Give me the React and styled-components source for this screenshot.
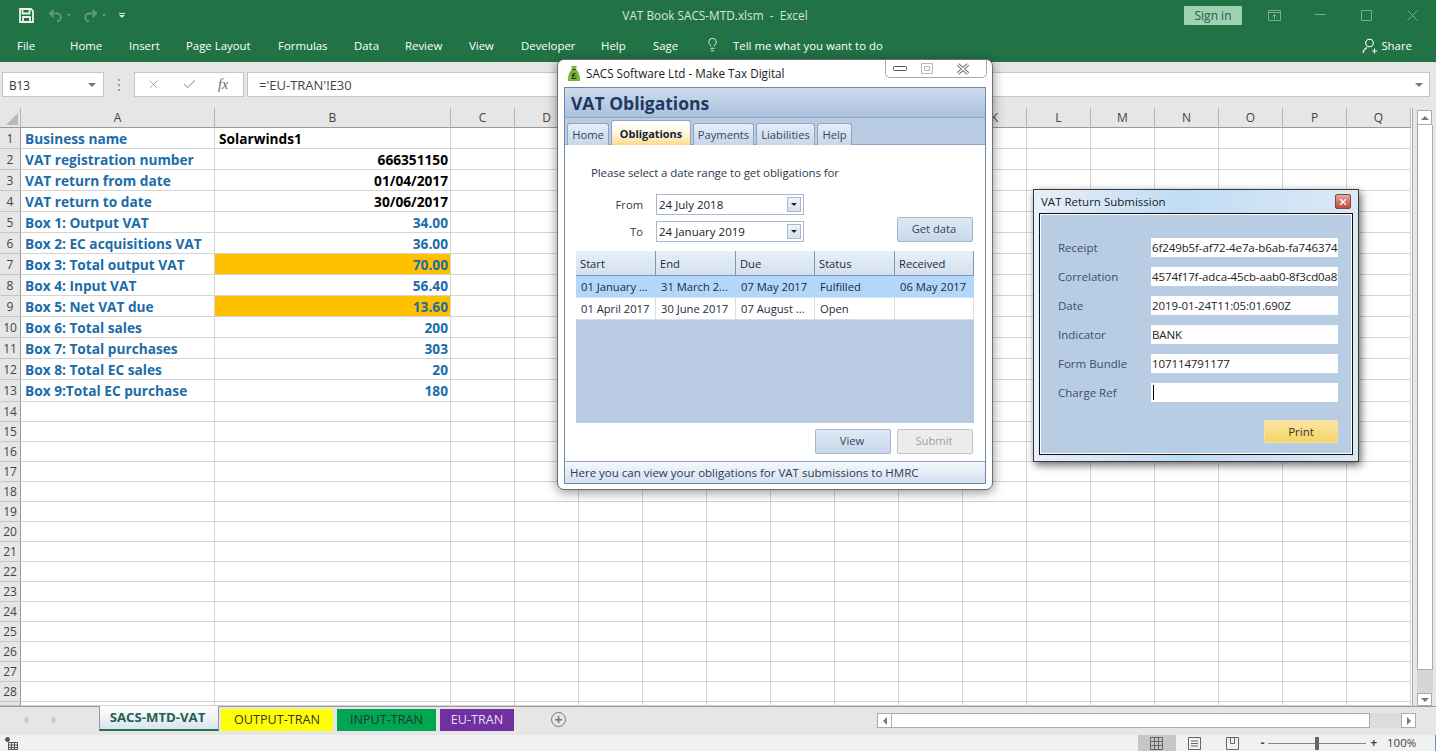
import React from "react";
import styled, { createGlobalStyle } from "styled-components";
import { X, Check, Lightbulb } from "lucide-react";

const GlobalStyle = createGlobalStyle`
    *, *::before, *::after {
        box-sizing: border-box;
    }
    html, body {
        margin: 0;
        padding: 0;
        background: #fff;
    }
    body {
        font-family: "Open Sans", "Liberation Sans", sans-serif;
    }
`;

const Page = styled.div`
    position: relative;
    width: 1436px;
    height: 751px;
    overflow: hidden;
    display: flex;
    flex-direction: column;
    font-size: 11.5px;
    color: #333;
`;

/* title bar */
const TitleBar = styled.div`
    height: 31px;
    flex-shrink: 0;
    background: #217346;
    color: #d6e6dc;
    display: grid;
    grid-template-columns: 1fr auto 1fr;
    align-items: center;
    padding-bottom: 1px;
`;
const Qat = styled.div`
    display: flex;
    align-items: center;
    padding-left: 19px;
    gap: 14px;
`;
const QatUndo = styled.div`
    display: flex;
    align-items: center;
    gap: 4px;
    margin-right: -2px;
    &::after {
        content: "";
        border-left: 2px solid transparent;
        border-right: 2px solid transparent;
        border-top: 3px solid #5f9b7b;
    }
`;
const Customize = styled.div`
    margin-left: 1px;
    display: flex;
    flex-direction: column;
    align-items: center;
    gap: 1px;
    &::before {
        content: "";
        width: 6px;
        height: 1px;
        background: #dfeae3;
    }
    &::after {
        content: "";
        border-left: 3px solid transparent;
        border-right: 3px solid transparent;
        border-top: 3px solid #dfeae3;
    }
`;
const DocTitle = styled.div`
    font-size: 11.8px;
    margin-right: 6px;
`;
const WinControls = styled.div`
    display: flex;
    justify-content: flex-end;
    align-items: center;
    padding-right: 1px;
`;
const SignIn = styled.div`
    width: 58px;
    height: 19px;
    margin-right: 9px;
    background: #9fd0b4;
    color: #25603f;
    border-radius: 1px;
    font-size: 12px;
    line-height: 19px;
    text-align: center;
`;
const WinBtn = styled.div`
    width: 46px;
    height: 26px;
    display: flex;
    align-items: center;
    justify-content: center;
`;

/* ribbon tabs */
const Ribbon = styled.div`
    height: 31px;
    flex-shrink: 0;
    background: #217346;
    color: #fff;
    display: flex;
    align-items: center;
    padding: 0 24px 2px 17px;
    font-size: 11.4px;
`;
const RibbonTab = styled.div`
    width: ${(p) => p.$w}px;
    flex-shrink: 0;
    white-space: nowrap;
`;
const Share = styled.div`
    margin-left: auto;
    display: flex;
    align-items: center;
    gap: 3px;
`;

/* formula bar */
const FormulaBar = styled.div`
    height: 46px;
    flex-shrink: 0;
    background: #e6e6e6;
    display: flex;
    padding: 10px 6px 11px 2px;
`;
const FieldBox = styled.div`
    background: #fff;
    border: 1px solid #c6c6c6;
    display: flex;
    align-items: center;
`;
const NameBox = styled(FieldBox)`
    width: 102px;
    padding: 0 7px 0 6px;
    justify-content: space-between;
    font-size: 11.8px;
`;
const Caret = styled.span`
    width: 0;
    height: 0;
    border-left: 4px solid transparent;
    border-right: 4px solid transparent;
    border-top: 4px solid ${(p) => p.$color || "#777"};
`;
const Dots = styled.div`
    width: 30px;
    display: flex;
    flex-direction: column;
    align-items: center;
    justify-content: center;
    gap: 3px;
    span {
        width: 2px;
        height: 2px;
        background: #a0a0a0;
    }
`;
const FxBox = styled(FieldBox)`
    width: 110px;
    margin-right: 3px;
    padding-left: 11px;
    gap: 21px;
    color: #b0b0b0;
`;
const Fx = styled.i`
    font-family: "Liberation Serif", serif;
    font-size: 14px;
    color: #666;
`;
const FormulaInput = styled(FieldBox)`
    flex: 1;
    padding: 0 6px 0 11px;
    justify-content: space-between;
    color: #444;
    font-size: 13px;
`;

/* sheet */
const SheetArea = styled.div`
    height: 598px;
    flex-shrink: 0;
    display: flex;
    background: #e6e6e6;
`;
const SheetGrid = styled.div`
    width: 1413px;
    background: #fff;
    display: grid;
    grid-template-columns: 21px 194px 236px repeat(15, 64px);
    grid-template-rows: 20px repeat(12, 21px) 22px repeat(15, 20px) 4px;
    border-right: 1px solid #a8a8a8;
    overflow: hidden;
`;
const Corner = styled.div`
    background: #e6e6e6;
    border-right: 1px solid #b4b4b4;
    border-bottom: 1px solid #9a9a9a;
    display: flex;
    align-items: flex-end;
    justify-content: flex-end;
    padding: 0 2px 2px 0;
    &::after {
        content: "";
        border-left: 12px solid transparent;
        border-bottom: 12px solid #b8b8b8;
    }
`;
const ColHead = styled.div`
    background: #e6e6e6;
    border-right: 1px solid #b4b4b4;
    border-bottom: 1px solid #9a9a9a;
    text-align: center;
    font-size: 12px;
    line-height: 19px;
    color: #444;
`;
const RowHead = styled.div`
    background: #e6e6e6;
    border-right: 1px solid #9a9a9a;
    border-bottom: 1px solid #c4c4c4;
    font-size: 12px;
    color: #444;
    display: flex;
    align-items: center;
    justify-content: center;
`;
const Cell = styled.div`
    background: ${(p) => p.$fill || "#fff"};
    color: ${(p) => p.$color || "#000"};
    font-weight: 700;
    font-size: 13.7px;
    border-right: 1px solid #d4d4d4;
    border-bottom: 1px solid #d4d4d4;
    padding: 0 2px 0 4px;
    display: flex;
    align-items: center;
    justify-content: ${(p) => (p.$align === "right" ? "flex-end" : "flex-start")};
    white-space: nowrap;
`;

/* scrollbars */
const VScroll = styled.div`
    flex: 1;
    display: flex;
    flex-direction: column;
    padding: 2px 3px 0 4px;
`;
const ScrollBtn = styled.div`
    background: #fff;
    border: 1px solid #ababab;
    width: ${(p) => p.$w || 15}px;
    height: ${(p) => p.$h || 15}px;
    flex-shrink: 0;
    display: flex;
    align-items: center;
    justify-content: center;
`;
const VThumb = styled.div`
    height: 545px;
    flex-shrink: 0;
    background: #fff;
    border: 1px solid #ababab;
    border-top: 0;
`;
const ScrollGap = styled.div`
    flex: 1;
    background: #d6d6d6;
`;
const ArrowV = styled.span`
    width: 0;
    height: 0;
    border-left: 4px solid transparent;
    border-right: 4px solid transparent;
    ${(p) => (p.$up ? "border-bottom" : "border-top")}: 4px solid #777;
`;
const ArrowH = styled.span`
    width: 0;
    height: 0;
    border-top: 4px solid transparent;
    border-bottom: 4px solid transparent;
    ${(p) => (p.$left ? "border-right" : "border-left")}: 4px solid ${(p) => p.$color || "#777"};
`;

/* sheet tabs */
const TabBar = styled.div`
    height: 29px;
    flex-shrink: 0;
    background: #e6e6e6;
    border-top: 1px solid #9a9a9a;
    display: flex;
    align-items: flex-start;
    padding-right: 20px;
`;
const TabNav = styled.div`
    width: 99px;
    height: 26px;
    flex-shrink: 0;
    display: flex;
    align-items: center;
    gap: 24px;
    padding-left: 24px;
`;
const ActiveSheetTab = styled.div`
    width: 120px;
    height: 25px;
    flex-shrink: 0;
    margin-top: -1px;
    margin-right: 2px;
    padding-right: 3px;
    background: linear-gradient(#ffffff, #d8e4f2);
    border-left: 1px solid #9a9a9a;
    border-right: 1px solid #9a9a9a;
    border-bottom: 2px solid #217346;
    color: #25604a;
    font-weight: 700;
    font-size: 13.2px;
    line-height: 23px;
    text-align: center;
`;
const SheetTab = styled.div`
    width: ${(p) => p.$w}px;
    height: 22px;
    flex-shrink: 0;
    margin-top: 2px;
    margin-right: 4px;
    background: ${(p) => p.$bg};
    color: ${(p) => p.$fg};
    font-size: 12.6px;
    line-height: 22px;
    text-align: center;
    white-space: nowrap;
`;
const AddSheet = styled.div`
    width: 15px;
    height: 15px;
    margin: 5px 0 0 33px;
    border: 1px solid #777;
    border-radius: 50%;
    color: #777;
    display: flex;
    align-items: center;
    justify-content: center;
    font-size: 14px;
    line-height: 1;
    font-weight: 700;
`;
const HScroll = styled.div`
    margin-left: auto;
    width: 539px;
    height: 15px;
    margin-top: 6px;
    display: flex;
`;
const HThumb = styled.div`
    width: 478px;
    background: #fff;
    border: 1px solid #ababab;
    border-left: 0;
    flex-shrink: 0;
`;
const HTrack = styled.div`
    flex: 1;
    background: #dcdcdc;
`;

/* status bar */
const StatusBar = styled.div`
    height: 16px;
    flex-shrink: 0;
    background: #f1f1f1;
    border-right: 1px solid #5b8fc0;
    display: flex;
    align-items: center;
    padding-left: 5px;
    color: #444;
`;
const ViewBtn = styled.div`
    width: 38px;
    height: 16px;
    background: ${(p) => (p.$on ? "#c6c6c6" : "transparent")};
    display: flex;
    align-items: center;
    justify-content: center;
`;
const ViewGroup = styled.div`
    margin-left: auto;
    display: flex;
    margin-right: 1px;
`;
const ZoomSlider = styled.div`
    display: flex;
    align-items: center;
    margin-left: 8px;
    font-weight: 700;
    line-height: 14px;
    gap: 4px;
`;
const SliderTrack = styled.div`
    position: relative;
    width: 98px;
    height: 1px;
    background: #888;
    &::after {
        content: "";
        position: absolute;
        left: 47px;
        top: -6px;
        width: 4px;
        height: 13px;
        background: #666;
    }
`;
const ZoomValue = styled.div`
    width: 58px;
    padding-left: 10px;
    line-height: 14px;
`;

/* obligations window */
const AppWindow = styled.div`
    position: absolute;
    left: 557px;
    top: 59px;
    width: 436px;
    height: 431px;
    background: #fff;
    border: 1px solid #6f6f6f;
    border-radius: 7px;
    box-shadow: 0 2px 12px rgba(0, 0, 0, 0.45);
    display: flex;
    flex-direction: column;
    padding: 0 6px 5px 6px;
    color: #2b3a4e;
`;
const Caption = styled.div`
    height: 27px;
    flex-shrink: 0;
    display: flex;
    align-items: center;
    gap: 4px;
    padding: 0 0 1px 2px;
    font-size: 11.7px;
    color: #1c1c1c;
    position: relative;
`;
const CaptionBtns = styled.div`
    position: absolute;
    right: -1px;
    top: 0;
    width: 102px;
    height: 18px;
    border: 1px solid #a9a9a9;
    border-top: 0;
    border-radius: 0 0 5px 5px;
    display: grid;
    grid-template-columns: 28px 26px 1fr;
    align-items: center;
    justify-items: center;
    background: #fff;
`;
const Panel = styled.div`
    flex: 1;
    border: 1px solid #6f88a8;
    display: flex;
    flex-direction: column;
    min-height: 0;
`;
const PanelHead = styled.div`
    height: 30px;
    flex-shrink: 0;
    background: linear-gradient(#cfdcec, #a9c0dc);
    border-bottom: 1px solid #8ea6c4;
    color: #1e3a63;
    font-size: 17.5px;
    font-weight: 700;
    line-height: 31px;
    padding-left: 6px;
`;
const TabStrip = styled.div`
    height: 27px;
    flex-shrink: 0;
    background: #b8cbe3;
    border-bottom: 1px solid #8ea6c4;
    display: flex;
    align-items: flex-end;
    padding-left: 2px;
    gap: 2px;
`;
const PanelTab = styled.div`
    width: ${(p) => p.$w}px;
    height: ${(p) => (p.$on ? 25 : 22)}px;
    margin-bottom: -1px;
    background: ${(p) =>
        p.$on
            ? "linear-gradient(#ffffff 10%, #fff6d8 55%, #ffd98a)"
            : "linear-gradient(#e6eef7, #c6d6ea)"};
    border: 1px solid #8ea6c4;
    border-bottom: 0;
    border-radius: 3px 3px 0 0;
    color: ${(p) => (p.$on ? "#14233a" : "#34465f")};
    font-weight: ${(p) => (p.$on ? 700 : 400)};
    font-size: ${(p) => (p.$on ? 10.9 : 11.2)}px;
    display: flex;
    align-items: center;
    justify-content: center;
    white-space: nowrap;
`;
const PanelBody = styled.div`
    flex: 1;
    display: flex;
    flex-direction: column;
    padding: 20px 11px 0 11px;
    min-height: 0;
`;
const Intro = styled.div`
    padding-left: 15px;
    line-height: 16px;
    letter-spacing: -0.1px;
`;
const FormRow = styled.div`
    display: flex;
    justify-content: space-between;
    align-items: flex-end;
    margin-top: 13px;
    padding-right: 1px;
`;
const DateGrid = styled.div`
    display: grid;
    grid-template-columns: 67px 148px;
    column-gap: 13px;
    row-gap: 6px;
    grid-auto-rows: 21px;
    align-items: center;
`;
const DateLabel = styled.div`
    text-align: right;
    font-size: 11.2px;
`;
const Combo = styled.div`
    height: 21px;
    background: #fff;
    border: 1px solid #a9b8cc;
    display: flex;
    align-items: center;
    justify-content: space-between;
    padding: 0 2px 0 2px;
    color: #222;
`;
const ComboBtn = styled.div`
    width: 14px;
    height: 15px;
    background: linear-gradient(#eef3f9, #d5e0ee);
    border: 1px solid #a9b8cc;
    display: flex;
    align-items: center;
    justify-content: center;
`;
const ComboCaret = styled.span`
    width: 0;
    height: 0;
    border-left: 3px solid transparent;
    border-right: 3px solid transparent;
    border-top: 3px solid #222;
`;
const ActionBtn = styled.div`
    width: 76px;
    height: 25px;
    border: 1px solid ${(p) => (p.$off ? "#c4c4c4" : "#a6b7cc")};
    border-radius: 2px;
    background: ${(p) =>
        p.$off ? "#ececec" : "linear-gradient(#dfe9f5, #c8d8ea)"};
    color: ${(p) => (p.$off ? "#a2a2a2" : "#33465f")};
    font-size: 11.2px;
    padding: 0 2px 2px 0;
    display: flex;
    align-items: center;
    justify-content: center;
`;
const ObTable = styled.div`
    margin-top: 9px;
    height: 172px;
    background: #b8cbe3;
    flex-shrink: 0;
`;
const ObRow = styled.div`
    display: grid;
    grid-template-columns: 80px 80px 79px 80px 79px;
    height: ${(p) => p.$h}px;
    background: ${(p) => p.$bg};
    border-bottom: 1px solid ${(p) => p.$line};
`;
const ObCell = styled.div`
    border-right: 1px solid ${(p) => p.$line};
    padding-left: ${(p) => p.$pad}px;
    font-size: 11.2px;
    display: flex;
    align-items: center;
    white-space: nowrap;
    overflow: hidden;
    color: #1e2a3a;
`;
const ButtonRow = styled.div`
    margin-top: 6px;
    display: flex;
    justify-content: flex-end;
    gap: 6px;
    padding-right: 1px;
`;
const PanelStatus = styled.div`
    height: 22px;
    margin-top: auto;
    flex-shrink: 0;
    background: linear-gradient(#f4f8fc, #d3e0f0);
    border-top: 1px solid #8ea6c4;
    padding-left: 5px;
    line-height: 21px;
`;

/* submission window */
const ReturnWindow = styled.div`
    position: absolute;
    left: 1033px;
    top: 189px;
    width: 326px;
    height: 273px;
    background: linear-gradient(90deg, #e9f0f8, #bfdcf5 45%, #dce9f5);
    border: 1px solid #3a3a3a;
    box-shadow: 2px 3px 8px rgba(0, 0, 0, 0.6);
    display: flex;
    flex-direction: column;
    padding: 0 5px 6px 5px;
`;
const ReturnCaption = styled.div`
    height: 23px;
    flex-shrink: 0;
    display: flex;
    align-items: center;
    justify-content: space-between;
    padding: 0 2px;
    color: #222;
`;
const CloseBtn = styled.div`
    width: 16px;
    height: 15px;
    background: linear-gradient(#e9a79a, #c24a38);
    border: 1px solid #7a4a48;
    border-radius: 2px;
    display: flex;
    align-items: center;
    justify-content: center;
    color: #fff;
`;
const ReturnBody = styled.div`
    flex: 1;
    background: #b8cce4;
    border: 1px solid #111;
    outline: 1px solid #fff;
    outline-offset: -2px;
    display: grid;
    grid-template-columns: 93px 187px;
    grid-auto-rows: 19px;
    row-gap: 10px;
    align-content: start;
    align-items: center;
    padding: 24px 0 0 18px;
    color: #3a4f6c;
`;
const ReturnValue = styled.div`
    height: 19px;
    background: #fff;
    color: #222;
    line-height: 19px;
    padding-left: 1px;
    letter-spacing: -0.1px;
    white-space: nowrap;
    overflow: hidden;
`;
const TextCaret = styled.span`
    display: block;
    width: 1px;
    height: 15px;
    background: #000;
    margin: 2px 0 0 1px;
`;
const PrintBtn = styled.div`
    grid-column: 2;
    justify-self: end;
    align-self: start;
    width: 74px;
    height: 23px;
    margin-top: 8px;
    background: linear-gradient(#fbe6a2, #f6d365);
    border: 1px solid #f3e3b0;
    color: #333;
    display: flex;
    align-items: center;
    justify-content: center;
`;

const ribbonTabs = [
    ["File", 53],
    ["Home", 59],
    ["Insert", 57],
    ["Page Layout", 92],
    ["Formulas", 76],
    ["Data", 51],
    ["Review", 64],
    ["View", 52],
    ["Developer", 80],
    ["Help", 52],
    ["Sage", 52],
];

const blue = "#1b6ca8";
const sheetRows = [
    ["Business name", "Solarwinds1", "left"],
    ["VAT registration number", "666351150", "right", "#000"],
    ["VAT return from date", "01/04/2017", "right", "#000"],
    ["VAT return to date", "30/06/2017", "right", "#000"],
    ["Box 1: Output VAT", "34.00", "right", blue],
    ["Box 2: EC acquisitions VAT", "36.00", "right", blue],
    ["Box 3: Total output VAT", "70.00", "right", blue, "#ffc000"],
    ["Box 4: Input VAT", "56.40", "right", blue],
    ["Box 5: Net VAT due", "13.60", "right", blue, "#ffc000"],
    ["Box 6: Total sales", "200", "right", blue],
    ["Box 7: Total purchases", "303", "right", blue],
    ["Box 8: Total EC sales", "20", "right", blue],
    ["Box 9:Total EC purchase", "180", "right", blue],
];

const columns = "ABCDEFGHIJKLMNOPQ".split("");
const emptyCols = columns.slice(2);
const rowNumbers = Array.from({ length: 29 }, (_, i) => i + 1);

const obligationRows = [
    ["01 January ...", "31 March 2...", "07 May 2017", "Fulfilled", "06 May 2017"],
    ["01 April 2017", "30 June 2017", "07 August ...", "Open", ""],
];

const returnFields = [
    ["Receipt", "6f249b5f-af72-4e7a-b6ab-fa746374"],
    ["Correlation", "4574f17f-adca-45cb-aab0-8f3cd0a8f"],
    ["Date", "2019-01-24T11:05:01.690Z"],
    ["Indicator", "BANK"],
    ["Form Bundle", "107114791177"],
];

function SaveIcon() {
    return (
        <svg width="15" height="15" viewBox="0 0 15 15" fill="none" stroke="#e8f4ec" strokeWidth="1.8">
            <path d="M1 1h11l2 2v11H1z" />
            <path d="M3.500 1v4.500h7V1M4 14V9h7v5" />
        </svg>
    );
}

function UndoIcon({ flip }) {
    return (
        <svg width="15" height="13" viewBox="0 0 15 13" fill="none" stroke="#5f9b7b" strokeWidth="2"
            style={flip ? { transform: "scaleX(-1)" } : undefined}>
            <path d="M5.500 1 2 4.500 5.500 8M2.500 4.500h6.500a3.800 3.800 0 0 1 0 7.600" />
        </svg>
    );
}

function MoneyBag() {
    return (
        <svg width="16" height="17" viewBox="0 0 16 17">
            <path d="M5 1h6l-1.500 3.500c3 1.500 4.500 5 4.500 11.500H2c0-6.500 1.500-10 4.500-11.500z" fill="#7fb23a" />
            <path d="M5.500 4.500h5" stroke="#35561a" strokeWidth="1" />
            <text x="8" y="14" fontSize="9" fontWeight="700" textAnchor="middle" fill="#1e3a10" fontFamily="Liberation Sans">£</text>
        </svg>
    );
}

function CloseGlyph() {
    return (
        <svg width="16" height="12" viewBox="0 0 16 12" fill="none">
            <path d="M3 1.500 13 10.500M13 1.500 3 10.500" stroke="#6a6a6a" strokeWidth="3.200" />
            <path d="M3 1.500 13 10.500M13 1.500 3 10.500" stroke="#fff" strokeWidth="1.400" />
        </svg>
    );
}

export default function App() {
    return (
        <Page>
            <GlobalStyle />
            <TitleBar>
                <Qat>
                    <SaveIcon />
                    <QatUndo><UndoIcon /></QatUndo>
                    <QatUndo><UndoIcon flip /></QatUndo>
                    <Customize />
                </Qat>
                <DocTitle>VAT Book SACS-MTD.xlsm&nbsp; -&nbsp; Excel</DocTitle>
                <WinControls>
                    <SignIn>Sign in</SignIn>
                    <WinBtn>
                        <svg width="13" height="11" viewBox="0 0 13 11" fill="none" stroke="#7fae95">
                            <path d="M.5.5h12v10H.5zM.5 2.500h12M6.500 9V4.500M4.500 6.500l2-2 2 2" />
                        </svg>
                    </WinBtn>
                    <WinBtn>
                        <svg width="11" height="2" fill="none" stroke="#7fae95"><path d="M0 .5h11" /></svg>
                    </WinBtn>
                    <WinBtn>
                        <svg width="11" height="11" fill="none" stroke="#7fae95"><path d="M.5.5h10v10H.5z" /></svg>
                    </WinBtn>
                    <WinBtn>
                        <svg width="11" height="11" fill="none" stroke="#7fae95"><path d="M.5.5l10 10M10.500.5l-10 10" /></svg>
                    </WinBtn>
                </WinControls>
            </TitleBar>

            <Ribbon>
                {ribbonTabs.map(([name, w]) => (
                    <RibbonTab key={name} $w={w}>{name}</RibbonTab>
                ))}
                <RibbonTab $w={28}>
                    <Lightbulb size={15} strokeWidth={1.3} />
                </RibbonTab>
                <RibbonTab $w={160}>Tell me what you want to do</RibbonTab>
                <Share>
                    <svg width="16" height="16" viewBox="0 0 16 16" fill="none" stroke="#fff" strokeWidth="1.1">
                        <circle cx="7.500" cy="5" r="3.800" />
                        <path d="M1 15c.5-3 2-4.500 4-5.500M10 13h5M12.500 10.500v5" />
                    </svg>
                    Share
                </Share>
            </Ribbon>

            <FormulaBar>
                <NameBox>
                    B13
                    <Caret />
                </NameBox>
                <Dots>
                    <span />
                    <span />
                    <span />
                </Dots>
                <FxBox>
                    <X size={15} strokeWidth={1.6} />
                    <Check size={15} strokeWidth={2} />
                    <Fx>fx</Fx>
                </FxBox>
                <FormulaInput>
                    ='EU-TRAN'!E30
                    <Caret />
                </FormulaInput>
            </FormulaBar>

            <SheetArea>
                <SheetGrid>
                    <Corner />
                    {columns.map((c) => (
                        <ColHead key={c}>{c}</ColHead>
                    ))}
                    {rowNumbers.map((n) => {
                        const row = sheetRows[n - 1];
                        return (
                            <React.Fragment key={n}>
                                <RowHead>{n < 29 ? n : ""}</RowHead>
                                <Cell $color={blue}>{row ? row[0] : ""}</Cell>
                                <Cell $align={row ? row[2] : "left"} $color={row ? row[3] : undefined} $fill={row ? row[4] : undefined}>
                                    {row ? row[1] : ""}
                                </Cell>
                                {emptyCols.map((c) => (
                                    <Cell key={c} />
                                ))}
                            </React.Fragment>
                        );
                    })}
                </SheetGrid>
                <VScroll>
                    <ScrollBtn><ArrowV $up /></ScrollBtn>
                    <VThumb />
                    <ScrollGap />
                    <ScrollBtn $h={13}><ArrowV /></ScrollBtn>
                </VScroll>
            </SheetArea>

            <TabBar>
                <TabNav>
                    <ArrowH $left $color="#c4c4c4" />
                    <ArrowH $color="#c4c4c4" />
                </TabNav>
                <ActiveSheetTab>SACS-MTD-VAT</ActiveSheetTab>
                <SheetTab $w={112} $bg="#ffff00" $fg="#333">OUTPUT-TRAN</SheetTab>
                <SheetTab $w={99} $bg="#00a651" $fg="#1b3a2a">INPUT-TRAN</SheetTab>
                <SheetTab $w={74} $bg="#7030a0" $fg="#e8dcf2">EU-TRAN</SheetTab>
                <AddSheet>+</AddSheet>
                <HScroll>
                    <ScrollBtn $w={15}><ArrowH $left /></ScrollBtn>
                    <HThumb />
                    <HTrack />
                    <ScrollBtn $w={15}><ArrowH /></ScrollBtn>
                </HScroll>
            </TabBar>

            <StatusBar>
                <svg width="13" height="13" viewBox="0 0 13 13" fill="none" stroke="#555">
                    <circle cx="2.500" cy="2.500" r="2" fill="#555" />
                    <path d="M3.500 5.500h9v7h-9zM6.500 5.500v7M9.500 5.500v7M3.500 8h9M3.500 10.500h9" />
                </svg>
                <ViewGroup>
                    <ViewBtn $on>
                        <svg width="13" height="13" fill="none" stroke="#666"><path d="M.5.5h12v12H.5zM4.500.5v12M8.500.5v12M.5 4.500h12M.5 8.500h12" /></svg>
                    </ViewBtn>
                    <ViewBtn>
                        <svg width="13" height="13" fill="none" stroke="#666"><path d="M.5.5h12v12H.5zM3 4h7M3 6.500h7M3 9h7" /></svg>
                    </ViewBtn>
                    <ViewBtn>
                        <svg width="13" height="13" fill="none" stroke="#666"><path d="M.5.5h12v12H.5zM4.500.5v6h4v-6" /></svg>
                    </ViewBtn>
                </ViewGroup>
                <ZoomSlider>
                    -
                    <SliderTrack />
                    +
                </ZoomSlider>
                <ZoomValue>100%</ZoomValue>
            </StatusBar>

            <AppWindow>
                <Caption>
                    <MoneyBag />
                    SACS Software Ltd - Make Tax Digital
                    <CaptionBtns>
                        <svg width="14" height="6" fill="none" stroke="#555"><rect x=".5" y=".5" width="13" height="4" rx="1" /></svg>
                        <svg width="12" height="11" fill="none" stroke="#b9b9b9"><path d="M.5.5h11v10H.5zM3.500 3.500h5v4h-5z" /></svg>
                        <CloseGlyph />
                    </CaptionBtns>
                </Caption>
                <Panel>
                    <PanelHead>VAT Obligations</PanelHead>
                    <TabStrip>
                        <PanelTab $w={42}>Home</PanelTab>
                        <PanelTab $w={80} $on>Obligations</PanelTab>
                        <PanelTab $w={61}>Payments</PanelTab>
                        <PanelTab $w={59}>Liabilities</PanelTab>
                        <PanelTab $w={35}>Help</PanelTab>
                    </TabStrip>
                    <PanelBody>
                        <Intro>Please select a date range to get obligations for</Intro>
                        <FormRow>
                            <DateGrid>
                                <DateLabel>From</DateLabel>
                                <Combo>
                                    24 July 2018
                                    <ComboBtn><ComboCaret /></ComboBtn>
                                </Combo>
                                <DateLabel>To</DateLabel>
                                <Combo>
                                    24 January 2019
                                    <ComboBtn><ComboCaret /></ComboBtn>
                                </Combo>
                            </DateGrid>
                            <ActionBtn>Get data</ActionBtn>
                        </FormRow>
                        <ObTable>
                            <ObRow $h={25} $bg="linear-gradient(#e9f0f8, #d2e0f0)" $line="#7f97b6">
                                {["Start", "End", "Due", "Status", "Received"].map((h) => (
                                    <ObCell key={h} $line="#7f97b6" $pad={4}>{h}</ObCell>
                                ))}
                            </ObRow>
                            {obligationRows.map((row, i) => (
                                <ObRow key={row[0]} $h={22} $bg={i === 0 ? "#b3d7fb" : "#fff"} $line="#d6dee8">
                                    {row.map((v, j) => (
                                        <ObCell key={j} $line={i === 0 ? "#b3d7fb" : "#d6dee8"} $pad={5}>{v}</ObCell>
                                    ))}
                                </ObRow>
                            ))}
                        </ObTable>
                        <ButtonRow>
                            <ActionBtn>View</ActionBtn>
                            <ActionBtn $off>Submit</ActionBtn>
                        </ButtonRow>
                    </PanelBody>
                    <PanelStatus>Here you can view your obligations for VAT submissions to HMRC</PanelStatus>
                </Panel>
            </AppWindow>

            <ReturnWindow>
                <ReturnCaption>
                    VAT Return Submission
                    <CloseBtn><X size={10} strokeWidth={3} /></CloseBtn>
                </ReturnCaption>
                <ReturnBody>
                    {returnFields.map(([label, value]) => (
                        <React.Fragment key={label}>
                            <div>{label}</div>
                            <ReturnValue>{value}</ReturnValue>
                        </React.Fragment>
                    ))}
                    <div>Charge Ref</div>
                    <ReturnValue><TextCaret /></ReturnValue>
                    <PrintBtn>Print</PrintBtn>
                </ReturnBody>
            </ReturnWindow>
        </Page>
    );
}
